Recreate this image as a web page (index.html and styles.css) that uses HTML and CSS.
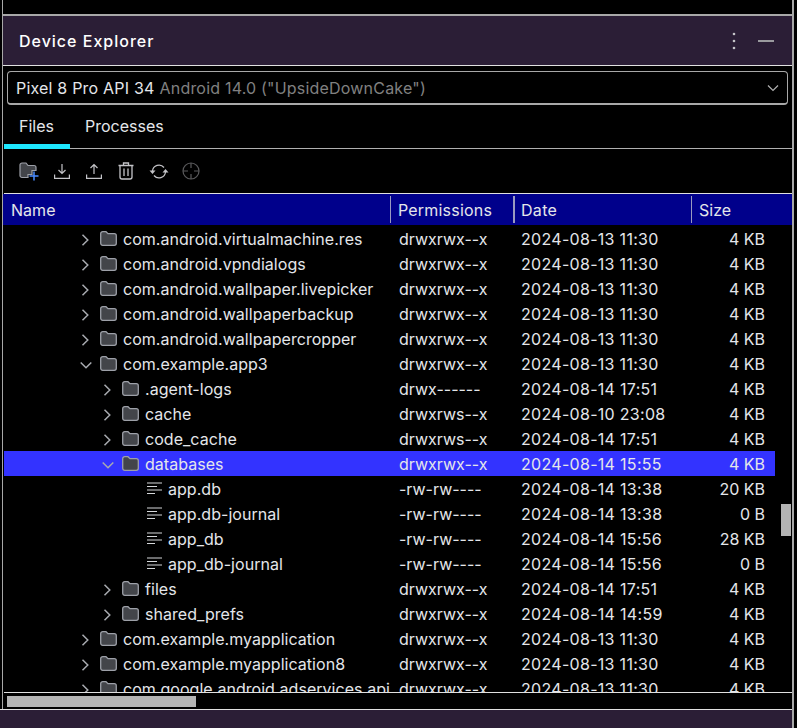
FILE: index.html
```html
<!DOCTYPE html>
<html lang="en">
<head>
<meta charset="UTF-8">
<title>Device Explorer</title>
<link rel="stylesheet" href="styles.css">
</head>
<body>
<svg class="sprites" width="0" height="0">
    <symbol id="folder" viewBox="0 0 17 15">
        <path d="M.7 2.700A2 2 0 0 1 2.700.7h3.300l2 2h6.300a2 2 0 0 1 2 2v7.600a2 2 0 0 1-2 2H2.700a2 2 0 0 1-2-2z" fill="#43454a" stroke="#9da0a8" stroke-width="1.300"/>
    </symbol>
    <symbol id="right" viewBox="0 0 12 12">
        <path d="M2.500.7L7.800 6l-5.300 5.300" fill="none" stroke="#a8abb0" stroke-width="1.500"/>
    </symbol>
    <symbol id="down" viewBox="0 0 12 12">
        <path d="M.7 3.500L6 8.800l5.300-5.300" fill="none" stroke="#a8abb0" stroke-width="1.500"/>
    </symbol>
    <symbol id="file" viewBox="0 0 15 13">
        <path d="M0 1h15M0 4.500h10M0 8h15M0 11.500h8" fill="none" stroke="#d5d7da" stroke-width="1"/>
    </symbol>
</svg>
<div class="window">
    <div class="titlebar">
        <span class="title">Device Explorer</span>
        <svg class="menu-icon" width="4" height="18" viewBox="0 0 4 18"><circle cx="2" cy="2" r="1.300" fill="#c4c4c8"/><circle cx="2" cy="9" r="1.300" fill="#c4c4c8"/><circle cx="2" cy="16" r="1.300" fill="#c4c4c8"/></svg>
        <span class="minimize"></span>
    </div>
    <div class="device-select">
        <span class="device-name">Pixel 8 Pro API 34</span>
        <span class="device-info">Android 14.0 ("UpsideDownCake")</span>
        <svg width="12" height="12" viewBox="0 0 12 12"><path d="M1 3.500l5 5 5-5" fill="none" stroke="#b0b0b0" stroke-width="1.200"/></svg>
    </div>
    <div class="tabs">
        <div class="tab active">Files</div>
        <div class="tab">Processes</div>
    </div>
    <div class="toolbar">
        <div class="tool"><svg width="20" height="19" viewBox="0 0 20 19"><path d="M1 3a2 2 0 0 1 2-2h4l2 2.500h6a2 2 0 0 1 2 2v3h-4v4h-4v3H3a2 2 0 0 1-2-2z" fill="#43454a" stroke="#9da0a8" stroke-width="1.200"/><path d="M15 9.500v9M10.500 14h9" stroke="#4a8cff" stroke-width="1.500"/></svg></div>
        <div class="tool"><svg width="16" height="16" viewBox="0 0 16 16"><path d="M8 1v9.500M4.500 7L8 10.500 11.500 7M.6 11.500v3.900h14.800v-3.900" fill="none" stroke="#c4c4c8" stroke-width="1.200"/></svg></div>
        <div class="tool"><svg width="16" height="16" viewBox="0 0 16 16"><path d="M8 11V1.500M4.500 5L8 1.500 11.500 5M.6 11.500v3.900h14.800v-3.900" fill="none" stroke="#c4c4c8" stroke-width="1.200"/></svg></div>
        <div class="tool"><svg width="16" height="18" viewBox="0 0 16 18"><path d="M.5 3.500h15M5.500 3.500V1h5v2.500M2 3.500V15a2 2 0 0 0 2 2h8a2 2 0 0 0 2-2V3.500M6 6.500v7.500M10 6.500v7.500" fill="none" stroke="#c4c4c8" stroke-width="1.300"/></svg></div>
        <div class="tool"><svg width="20" height="17" viewBox="0 0 20 17"><path d="M3.500 8A6.500 6.500 0 0 1 15 4.500M16.500 9A6.500 6.500 0 0 1 5 12.500" fill="none" stroke="#c4c4c8" stroke-width="1.200"/><path d="M.5 7.500h6L3.500 11zM13.500 9.500h6L16.500 6z" fill="#c4c4c8"/></svg></div>
        <div class="tool"><svg width="18" height="18" viewBox="0 0 18 18"><circle cx="9" cy="9" r="8" fill="none" stroke="#5a5a5c" stroke-width="1.200"/><path d="M9 1v5M9 12v5M1 9h5M12 9h5" stroke="#5a5a5c" stroke-width="1.200"/></svg></div>
    </div>
    <div class="file-table">
        <div class="row header">
            <div class="cell name">Name</div>
            <div class="cell perms">Permissions</div>
            <div class="cell date">Date</div>
            <div class="cell size">Size</div>
        </div>
        <div class="rows">
            <div class="row"><div class="cell name depth-1"><svg class="arrow"><use href="#right"/></svg><svg class="folder"><use href="#folder"/></svg>com.android.virtualmachine.res</div><div class="cell perms">drwxrwx--x</div><div class="cell date">2024-08-13 11:30</div><div class="cell size">4 KB</div></div>
            <div class="row"><div class="cell name depth-1"><svg class="arrow"><use href="#right"/></svg><svg class="folder"><use href="#folder"/></svg>com.android.vpndialogs</div><div class="cell perms">drwxrwx--x</div><div class="cell date">2024-08-13 11:30</div><div class="cell size">4 KB</div></div>
            <div class="row"><div class="cell name depth-1"><svg class="arrow"><use href="#right"/></svg><svg class="folder"><use href="#folder"/></svg>com.android.wallpaper.livepicker</div><div class="cell perms">drwxrwx--x</div><div class="cell date">2024-08-13 11:30</div><div class="cell size">4 KB</div></div>
            <div class="row"><div class="cell name depth-1"><svg class="arrow"><use href="#right"/></svg><svg class="folder"><use href="#folder"/></svg>com.android.wallpaperbackup</div><div class="cell perms">drwxrwx--x</div><div class="cell date">2024-08-13 11:30</div><div class="cell size">4 KB</div></div>
            <div class="row"><div class="cell name depth-1"><svg class="arrow"><use href="#right"/></svg><svg class="folder"><use href="#folder"/></svg>com.android.wallpapercropper</div><div class="cell perms">drwxrwx--x</div><div class="cell date">2024-08-13 11:30</div><div class="cell size">4 KB</div></div>
            <div class="row"><div class="cell name depth-1"><svg class="arrow"><use href="#down"/></svg><svg class="folder"><use href="#folder"/></svg>com.example.app3</div><div class="cell perms">drwxrwx--x</div><div class="cell date">2024-08-13 11:30</div><div class="cell size">4 KB</div></div>
            <div class="row"><div class="cell name depth-2"><svg class="arrow"><use href="#right"/></svg><svg class="folder"><use href="#folder"/></svg>.agent-logs</div><div class="cell perms">drwx------</div><div class="cell date">2024-08-14 17:51</div><div class="cell size">4 KB</div></div>
            <div class="row"><div class="cell name depth-2"><svg class="arrow"><use href="#right"/></svg><svg class="folder"><use href="#folder"/></svg>cache</div><div class="cell perms">drwxrws--x</div><div class="cell date">2024-08-10 23:08</div><div class="cell size">4 KB</div></div>
            <div class="row"><div class="cell name depth-2"><svg class="arrow"><use href="#right"/></svg><svg class="folder"><use href="#folder"/></svg>code_cache</div><div class="cell perms">drwxrws--x</div><div class="cell date">2024-08-14 17:51</div><div class="cell size">4 KB</div></div>
            <div class="row selected"><div class="cell name depth-2"><svg class="arrow"><use href="#down"/></svg><svg class="folder"><use href="#folder"/></svg>databases</div><div class="cell perms">drwxrwx--x</div><div class="cell date">2024-08-14 15:55</div><div class="cell size">4 KB</div></div>
            <div class="row"><div class="cell name depth-3"><svg class="doc"><use href="#file"/></svg>app.db</div><div class="cell perms">-rw-rw----</div><div class="cell date">2024-08-14 13:38</div><div class="cell size">20 KB</div></div>
            <div class="row"><div class="cell name depth-3"><svg class="doc"><use href="#file"/></svg>app.db-journal</div><div class="cell perms">-rw-rw----</div><div class="cell date">2024-08-14 13:38</div><div class="cell size">0 B</div></div>
            <div class="row"><div class="cell name depth-3"><svg class="doc"><use href="#file"/></svg>app_db</div><div class="cell perms">-rw-rw----</div><div class="cell date">2024-08-14 15:56</div><div class="cell size">28 KB</div></div>
            <div class="row"><div class="cell name depth-3"><svg class="doc"><use href="#file"/></svg>app_db-journal</div><div class="cell perms">-rw-rw----</div><div class="cell date">2024-08-14 15:56</div><div class="cell size">0 B</div></div>
            <div class="row"><div class="cell name depth-2"><svg class="arrow"><use href="#right"/></svg><svg class="folder"><use href="#folder"/></svg>files</div><div class="cell perms">drwxrwx--x</div><div class="cell date">2024-08-14 17:51</div><div class="cell size">4 KB</div></div>
            <div class="row"><div class="cell name depth-2"><svg class="arrow"><use href="#right"/></svg><svg class="folder"><use href="#folder"/></svg>shared_prefs</div><div class="cell perms">drwxrwx--x</div><div class="cell date">2024-08-14 14:59</div><div class="cell size">4 KB</div></div>
            <div class="row"><div class="cell name depth-1"><svg class="arrow"><use href="#right"/></svg><svg class="folder"><use href="#folder"/></svg>com.example.myapplication</div><div class="cell perms">drwxrwx--x</div><div class="cell date">2024-08-13 11:30</div><div class="cell size">4 KB</div></div>
            <div class="row"><div class="cell name depth-1"><svg class="arrow"><use href="#right"/></svg><svg class="folder"><use href="#folder"/></svg>com.example.myapplication8</div><div class="cell perms">drwxrwx--x</div><div class="cell date">2024-08-13 11:30</div><div class="cell size">4 KB</div></div>
            <div class="row"><div class="cell name depth-1"><svg class="arrow"><use href="#right"/></svg><svg class="folder"><use href="#folder"/></svg>com.google.android.adservices.api</div><div class="cell perms">drwxrwx--x</div><div class="cell date">2024-08-13 11:30</div><div class="cell size">4 KB</div></div>
            <div class="vscroll-thumb"></div>
        </div>
        <div class="hscroll"><div class="hscroll-thumb"></div></div>
    </div>
</div>
<div class="statusbar"></div>
</body>
</html>
```

FILE: styles.css
```css
html, body {
    margin: 0;
    height: 100%;
    background-color: #000;
    overflow: hidden;
}
body {
    width: 794px;
    box-sizing: border-box;
    border-right: 2px solid #a8a8a8;
    font-family: Inter, sans-serif;
    font-size: 16px;
    color: #e4e6ea;
}
.sprites {
    position: absolute;
}
.window {
    height: 709px;
    margin-left: 2px;
    padding-top: 14px;
    box-sizing: border-box;
    border-left: 1px solid #a8a8a8;
    display: flex;
    flex-direction: column;
}
.titlebar {
    height: 52px;
    flex: none;
    box-sizing: border-box;
    background-color: #2b1e36;
    border-top: 2px solid #a8a8a8;
    border-bottom: 1px solid #e0e0e0;
    display: flex;
    align-items: center;
    padding: 0 18px 0 16px;
}
.title {
    flex: 1;
    font-weight: 500;
    letter-spacing: 1px;
    color: #fff;
}
.menu-icon {
    margin-right: 22px;
}
.minimize {
    width: 16px;
    height: 2px;
    background-color: #9a9a9e;
}
.device-select {
    height: 34px;
    flex: none;
    box-sizing: border-box;
    margin: 5px 4px 0 4px;
    padding: 0 8px;
    border: 1px solid #a8a8a8;
    border-bottom-width: 2px;
    border-radius: 4px;
    display: flex;
    align-items: center;
    gap: 5px;
    letter-spacing: 0.2px;
}
.device-info {
    flex: 1;
    color: #808080;
}
.tabs {
    height: 44px;
    flex: none;
    margin-left: 1px;
    display: flex;
    border-bottom: 1px solid #b0b0b0;
    box-sizing: border-box;
}
.tab {
    padding: 0 15px;
    line-height: 43px;
    box-sizing: border-box;
    height: 44px;
}
.tab.active {
    width: 66px;
    border-bottom: 5px solid #1ee8ff;
}
.toolbar {
    height: 45px;
    flex: none;
    margin-left: 1px;
    box-sizing: border-box;
    display: flex;
    align-items: center;
    padding-left: 9px;
    border-bottom: 1px solid #e0e0e0;
}
.tool {
    width: 32.400px;
    display: flex;
    justify-content: center;
}
.file-table {
    flex: 1;
    min-height: 0;
    display: flex;
    flex-direction: column;
}
.row {
    display: flex;
    height: 25px;
    line-height: 27px;
    margin: 0 17px 0 1px;
    white-space: nowrap;
}
.cell {
    box-sizing: border-box;
    overflow: hidden;
}
.name {
    width: 386px;
    padding-top: 2px;
    line-height: 25px;
    display: flex;
    align-items: center;
    letter-spacing: 0.04px;
}
.perms {
    width: 123px;
    padding-left: 9px;
}
.date {
    width: 178px;
    padding-left: 8px;
    letter-spacing: 0.3px;
}
.size {
    width: 84px;
    padding-right: 10px;
    text-align: right;
}
.row.header {
    height: 31px;
    margin: 0;
    padding-left: 1px;
    flex: none;
    background-color: #00008b;
    box-sizing: border-box;
}
.header .cell {
    height: 27px;
    margin-top: 2px;
    line-height: 29px;
    border-left: 1px solid #9a9ac0;
}
.header .name {
    border-left: none;
    padding-left: 7px;
    line-height: 25px;
}
.header .perms {
    padding-left: 7px;
    letter-spacing: 0.2px;
}
.header .date {
    padding-left: 6px;
    border-left: 2px solid #9a9ac0;
}
.header .size {
    padding: 0 0 0 7px;
    text-align: left;
}
.rows {
    flex: 1;
    min-height: 0;
    overflow: hidden;
    position: relative;
    padding-top: 1px;
    margin-left: 1px;
    border-bottom: 1px solid #e0e0e0;
}
.rows .row {
    margin-left: 0;
}
.row.selected {
    background-color: #3333ff;
}
.depth-1 {
    padding-left: 76px;
}
.depth-2 {
    padding-left: 98px;
}
.depth-3 {
    padding-left: 143px;
}
.arrow {
    width: 12px;
    height: 12px;
    margin-right: 8px;
}
.folder {
    width: 17px;
    height: 15px;
    margin: -2px 6px 0 0;
}
.doc {
    width: 15px;
    height: 13px;
    margin: -2px 6px 0 0;
}
.vscroll-thumb {
    position: absolute;
    right: 1px;
    top: 279px;
    width: 10px;
    height: 32px;
    background-color: #b4b4b4;
}
.hscroll {
    height: 16px;
    flex: none;
    display: flex;
    align-items: center;
    padding-left: 4px;
}
.hscroll-thumb {
    width: 189px;
    height: 11px;
    background-color: #b4b4b4;
}
.statusbar {
    height: 19px;
    box-sizing: border-box;
    background-color: #2b1e36;
    border-top: 1px solid #e0e0e0;
}
```
